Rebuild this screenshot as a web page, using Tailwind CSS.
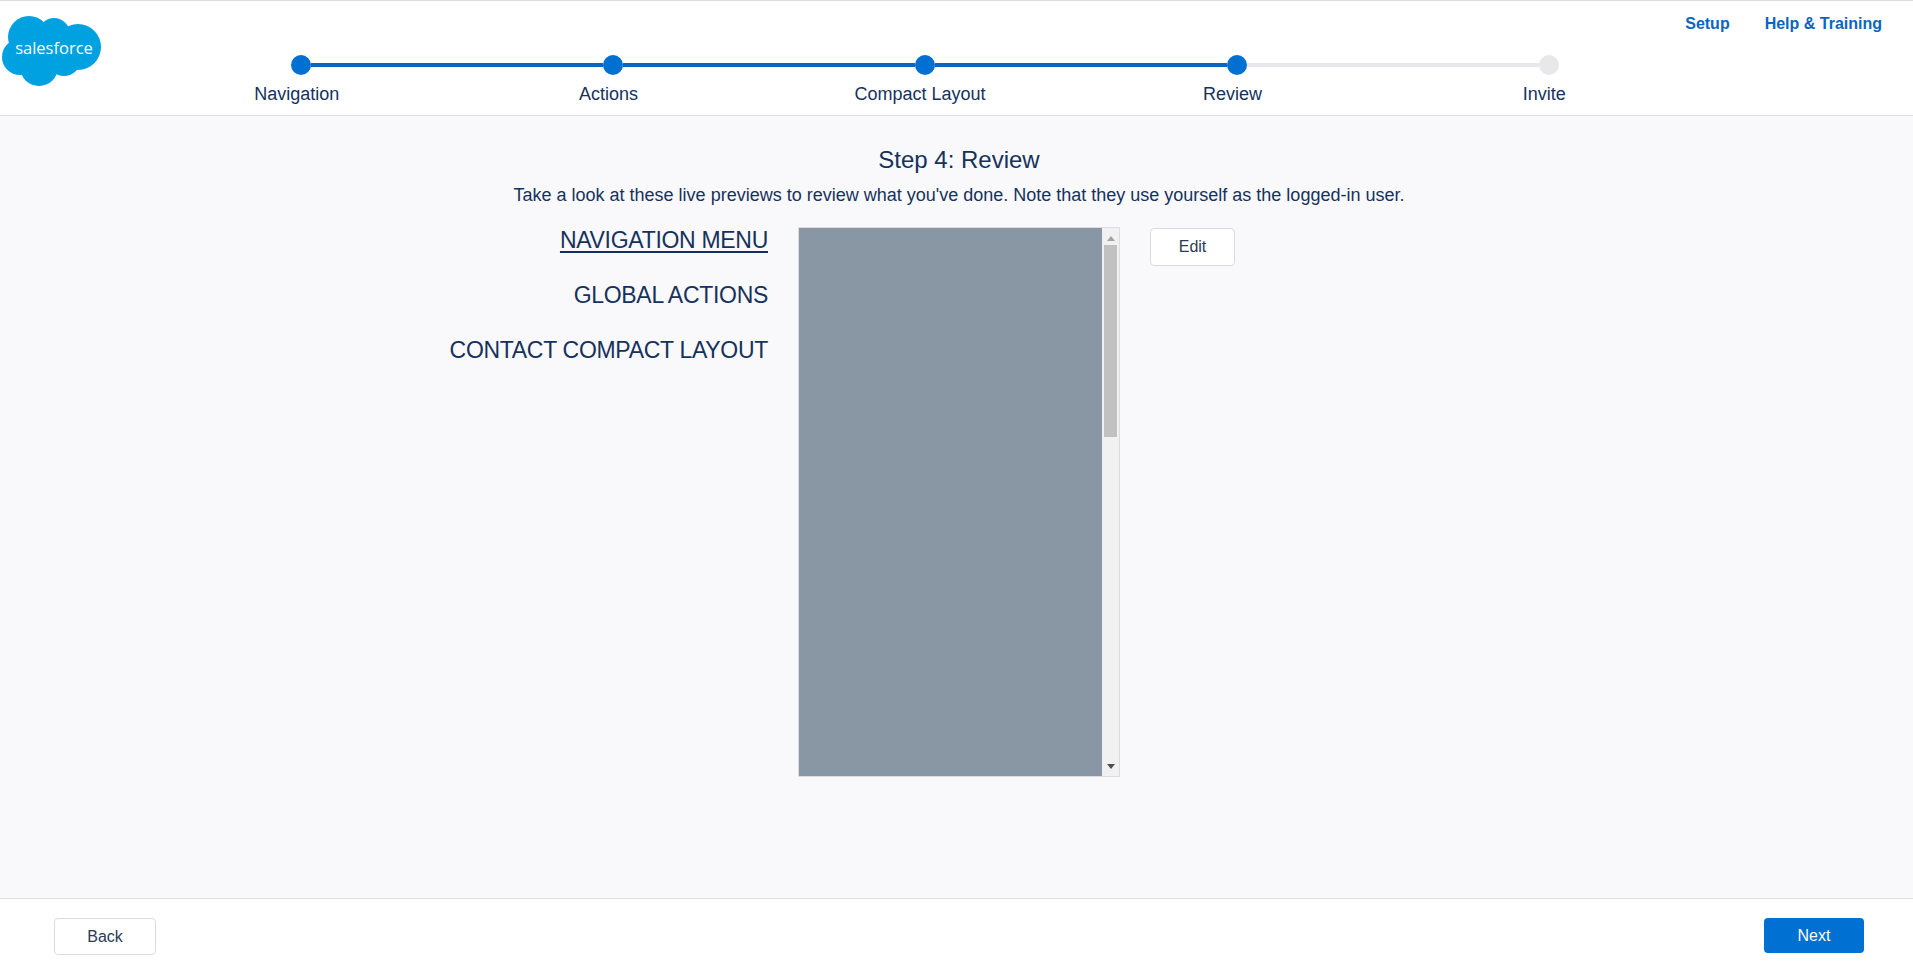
<!DOCTYPE html>
<html lang="en">
<head>
  <meta charset="UTF-8" />
  <title>Step 4: Review</title>
  <script src="https://cdn.jsdelivr.net/npm/@tailwindcss/browser@4"></script>
</head>
<body class="h-[973px] overflow-hidden flex flex-col bg-[#f9f9fb] font-['Liberation_Sans',Arial,sans-serif] text-[#16325c]">

  <!-- Header -->
  <header class="h-[116px] shrink-0 flex bg-white border-t border-b border-t-[#dddddd] border-b-[#dddddd]">
    <div class="w-[140px] shrink-0 pt-[15px] pl-px">
      <div class="relative w-[101px] h-[71px]">
        <svg class="absolute inset-0" width="101" height="71" viewBox="0 0 101 71" fill="#00a1e0">
          <circle cx="28" cy="21" r="21" />
          <circle cx="53" cy="18" r="16" />
          <circle cx="77" cy="31" r="23" />
          <circle cx="19" cy="41" r="18" />
          <circle cx="38" cy="51" r="19" />
          <circle cx="63" cy="43" r="17" />
          <rect x="20" y="20" width="55" height="25" />
        </svg>
        <span class="absolute left-[14px] top-[22px] w-[78px] text-center text-[16.5px] leading-[20px] text-white font-['Open_Sans',sans-serif]">salesforce</span>
      </div>
    </div>

    <!-- Stepper -->
    <div class="w-[1560px] shrink-0">
      <div class="flex items-center mt-[54px] ml-[151px]">
        <span class="w-5 h-5 rounded-full bg-[#0070d2] shrink-0"></span>
        <span class="w-[292px] h-1 bg-[#0b65c2]"></span>
        <span class="w-5 h-5 rounded-full bg-[#0070d2] shrink-0"></span>
        <span class="w-[292px] h-1 bg-[#0b65c2]"></span>
        <span class="w-5 h-5 rounded-full bg-[#0070d2] shrink-0"></span>
        <span class="w-[292px] h-1 bg-[#0b65c2]"></span>
        <span class="w-5 h-5 rounded-full bg-[#0070d2] shrink-0"></span>
        <span class="w-[292px] h-1 bg-[#e8e8ea]"></span>
        <span class="w-5 h-5 rounded-full bg-[#e8e8ea] shrink-0"></span>
      </div>
      <div class="flex mt-[9px] ml-px text-[18px] leading-[20px]">
        <span class="w-[312px] text-center">Navigation</span>
        <span class="w-[312px] text-center">Actions</span>
        <span class="w-[312px] text-center">Compact Layout</span>
        <span class="w-[312px] text-center ml-px">Review</span>
        <span class="w-[312px] text-center">Invite</span>
      </div>
    </div>

    <nav class="flex-1 relative">
      <div class="absolute right-[31px] top-[15px] flex gap-[35px] text-base font-bold leading-4 text-[#0b65c2] whitespace-nowrap">
        <a>Setup</a>
        <a>Help &amp; Training</a>
      </div>
    </nav>
  </header>

  <!-- Main -->
  <main class="flex-1 flex flex-col items-center">
    <h1 class="mt-[30px] ml-[5px] text-2xl leading-[28px]">Step 4: Review</h1>
    <p class="mt-[11px] ml-[5px] text-[18px] leading-[20px]">Take a look at these live previews to review what you've done. Note that they use yourself as the logged-in user.</p>
    <div class="self-start flex mt-[22px]">
      <div class="w-[768px] -mt-px flex flex-col items-end gap-[27px] text-[23px] leading-[28px] tracking-[-0.3px]">
        <a class="underline underline-offset-[3px]">NAVIGATION MENU</a>
        <a>GLOBAL ACTIONS</a>
        <a>CONTACT COMPACT LAYOUT</a>
      </div>
      <div class="ml-[30px] w-[322px] h-[550px] flex border border-[#dddddd] bg-[#f1f1f1]">
        <div class="w-[303px] h-full bg-[#8997a4]"></div>
        <div class="flex-1 flex flex-col items-center px-[2px]">
          <span class="mt-[8px] h-0 w-0 border-x-[4px] border-b-[5px] border-x-transparent border-b-[#a3a3a3]"></span>
          <span class="mt-[4px] w-full h-[192px] bg-[#c1c1c1]"></span>
          <span class="mt-auto mb-[7px] h-0 w-0 border-x-[4px] border-t-[5px] border-x-transparent border-t-[#505050]"></span>
        </div>
      </div>
      <button class="ml-[30px] w-[85px] h-[38px] mt-px pb-px bg-white border border-[#dddbda] rounded text-base text-[#2b3a55]">Edit</button>
    </div>
  </main>

  <!-- Footer -->
  <footer class="h-[75px] shrink-0 flex items-start justify-between bg-white border-t border-[#dddddd] pt-[19px] pl-[54px] pr-[49px]">
    <button class="w-[102px] h-[37px] bg-white border border-[#dddbda] rounded text-base text-[#2b3a55]">Back</button>
    <button class="w-[100px] h-[35px] bg-[#0070d2] rounded text-base text-white">Next</button>
  </footer>
</body>
</html>
